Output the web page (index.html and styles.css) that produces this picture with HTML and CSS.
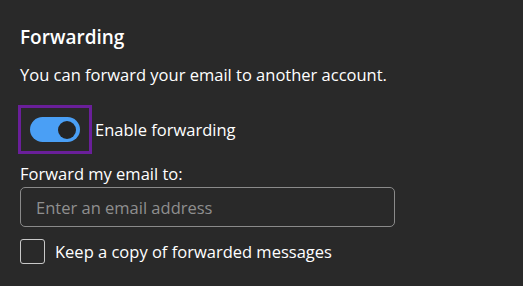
FILE: index.html
```html
<!DOCTYPE html>
<html>
<head>
<meta charset="utf-8">
<link rel="stylesheet" href="styles.css">
</head>
<body>
<div class="panel">
  <h2 class="title">Forwarding</h2>
  <p class="desc">You can forward your email to another account.</p>
  <div class="toggle-row">
    <div class="focus-ring">
      <div class="switch"><span class="knob"></span></div>
    </div>
    <span class="toggle-label">Enable forwarding</span>
  </div>
  <div class="field-label">Forward my email to:</div>
  <div class="input"><span class="placeholder">Enter an email address</span></div>
  <div class="check-row">
    <span class="checkbox"></span>
    <span class="check-label">Keep a copy of forwarded messages</span>
  </div>
</div>
</body>
</html>
```
FILE: styles.css
```css
html, body {
  margin: 0;
  padding: 0;
  background: #292929;
  width: 523px;
  height: 286px;
  overflow: hidden;
}
.panel {
  padding: 24px 20px 0 20px;
  font-family: "Open Sans", "Noto Sans", sans-serif;
  color: #ffffff;
}
.title {
  margin: 0;
  font-size: 19px;
  font-weight: 600;
  line-height: 26px;
}
.desc {
  margin: 13px 0 0 0;
  font-size: 16.5px;
  line-height: 24px;
}
.toggle-row {
  display: flex;
  align-items: center;
  margin-top: 18px;
  margin-left: -2px;
}
.focus-ring {
  border: 3px solid #6a1f9a;
  padding: 9px 9px;
  display: flex;
}
.switch {
  width: 50px;
  height: 25px;
  border-radius: 13px;
  background: #4a9ff5;
  box-sizing: border-box;
  position: relative;
}
.knob {
  position: absolute;
  width: 18px;
  height: 18px;
  border-radius: 50%;
  background: #242424;
  right: 4px;
  top: 3.5px;
}
.toggle-label {
  font-size: 16.5px;
  margin-left: 3px;
}
.field-label {
  margin-top: 9px;
  font-size: 16.5px;
  line-height: 22px;
}
.input {
  margin-top: 2px;
  width: 375px;
  height: 40px;
  box-sizing: border-box;
  border: 1px solid #8a8a8a;
  border-radius: 5px;
  display: flex;
  align-items: center;
  padding-left: 15px;
}
.placeholder {
  color: #8f8f8f;
  font-size: 16.5px;
}
.check-row {
  display: flex;
  align-items: center;
  margin-top: 12px;
}
.checkbox {
  width: 25px;
  height: 25px;
  box-sizing: border-box;
  border: 1.5px solid #c8c8c8;
  border-radius: 3px;
}
.check-label {
  margin-left: 10px;
  font-size: 16.5px;
}
```
